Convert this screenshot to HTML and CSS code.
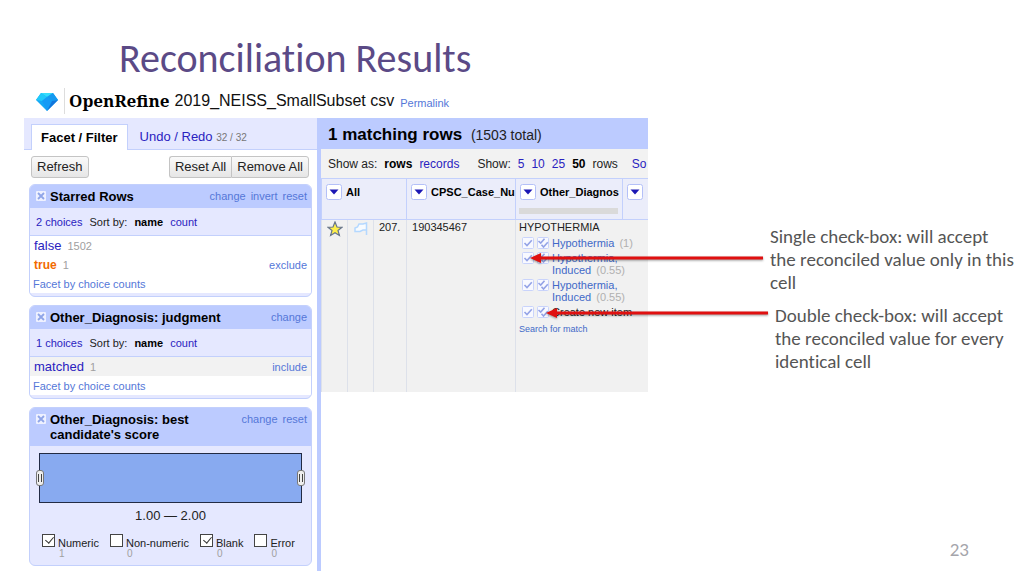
FILE: index.html
```html
<!DOCTYPE html>
<html lang="en">
<head>
<meta charset="utf-8">
<title>Reconciliation Results</title>
<link rel="stylesheet" href="styles.css">
</head>
<body>
<svg class="sprites" aria-hidden="true">
  <symbol id="check" viewBox="0 0 12 12"><rect x=".5" y=".5" width="11" height="11" rx="1" fill="#f8f9ff" stroke="#c9d3fb"/><path d="M2.500 6 5 8.600 9.800 3.300" fill="none" stroke="#94a3e6" stroke-width="1.600"/></symbol>
  <symbol id="double" viewBox="0 0 12 12"><rect x=".5" y=".5" width="11" height="11" rx="1" fill="#f8f9ff" stroke="#c9d3fb"/><path d="M1.500 4 3.700 6 7.500 1.800M4.500 7.800 6.500 10 10.800 5.300" fill="none" stroke="#94a3e6" stroke-width="1.600"/></symbol>
  <symbol id="close" viewBox="0 0 10 10"><rect width="10" height="10" rx="1" fill="#eef1ff"/><path d="M2 2 8 8M8 2 2 8" stroke="#8fa5e8" stroke-width="1.800"/></symbol>
  <symbol id="drop" viewBox="0 0 16 16"><rect x=".5" y=".5" width="15" height="15" rx="2" fill="#fff" stroke="#b4c0f8"/><path d="M3.500 5.500h9L8 10.500Z" fill="#1c18b4"/></symbol>
  <symbol id="grip" viewBox="0 0 8 16"><rect x=".5" y=".5" width="7" height="15" rx="2.500" fill="#eee" stroke="#777"/><path d="M2.500 4v8M5.500 4v8" stroke="#444"/></symbol>
</svg>
<main class="slide">
  <h1 class="title">Reconciliation Results</h1>
  <div class="content">
    <section class="app">
      <header class="app-header">
        <svg class="gem" viewBox="0 0 22 18"><path d="M5 0h12l5 7-11 11L0 7Z" fill="#16a8f5"/><path d="M5 0h12l-6 4Z" fill="#35ddfb"/><path d="M5 0 0 7l6 1 5-4Z" fill="#20c9fa"/><path d="m17 0 5 7-6 1-5-4Z" fill="#159af0"/><path d="m6 8 5-4 5 4-5 10Z" fill="#169bf5"/><path d="m22 7-6 1-5 10Z" fill="#1276dc"/></svg>
        <span class="brand">OpenRefine</span>
        <span class="project">2019_NEISS_SmallSubset csv</span>
        <a class="permalink" href="#">Permalink</a>
      </header>
      <div class="panels">
        <aside class="sidebar">
          <nav class="tabs">
            <a class="tab active" href="#">Facet / Filter</a>
            <a class="tab" href="#">Undo / Redo <small>32 / 32</small></a>
          </nav>
          <div class="toolbar">
            <button>Refresh</button>
            <div class="group"><button>Reset All</button><button>Remove All</button></div>
          </div>
          <div class="facets">
            <section class="facet">
              <header class="facet-head"><button class="icon-button" aria-label="Remove facet"><svg><use href="#close"/></svg></button><h2>Starred Rows</h2><div class="actions"><a href="#">change</a><a href="#">invert</a><a href="#">reset</a></div></header>
              <div class="sort"><a href="#">2 choices</a><span>Sort by:</span><b>name</b><a href="#">count</a></div>
              <div class="choices">
                <div class="choice"><a href="#">false</a><small>1502</small></div>
                <div class="choice"><a class="selected" href="#">true</a><small>1</small><a class="toggle" href="#">exclude</a></div>
                <a class="by-count" href="#">Facet by choice counts</a>
              </div>
            </section>
            <section class="facet">
              <header class="facet-head"><button class="icon-button" aria-label="Remove facet"><svg><use href="#close"/></svg></button><h2>Other_Diagnosis: judgment</h2><div class="actions"><a href="#">change</a></div></header>
              <div class="sort"><a href="#">1 choices</a><span>Sort by:</span><b>name</b><a href="#">count</a></div>
              <div class="choices">
                <div class="choice shaded"><a href="#">matched</a><small>1</small><a class="toggle" href="#">include</a></div>
                <a class="by-count" href="#">Facet by choice counts</a>
              </div>
            </section>
            <section class="facet">
              <header class="facet-head"><button class="icon-button" aria-label="Remove facet"><svg><use href="#close"/></svg></button><h2>Other_Diagnosis: best candidate's score</h2><div class="actions"><a href="#">change</a><a href="#">reset</a></div></header>
              <div class="histogram"><svg class="grip"><use href="#grip"/></svg><svg class="grip"><use href="#grip"/></svg></div>
              <p class="range">1.00 — 2.00</p>
              <div class="kinds">
                <label><input type="checkbox" checked><span>Numeric</span><small>1</small></label>
                <label><input type="checkbox"><span>Non-numeric</span><small>0</small></label>
                <label><input type="checkbox" checked><span>Blank</span><small>0</small></label>
                <label><input type="checkbox"><span>Error</span><small>0</small></label>
              </div>
            </section>
          </div>
        </aside>
        <section class="results">
          <h2 class="summary">1 matching rows <span>(1503 total)</span></h2>
          <div class="paging"><span>Show as:</span><b>rows</b><a href="#">records</a><span class="show">Show:</span><a href="#">5</a><a href="#">10</a><a href="#">25</a><b>50</b><span>rows</span><a class="sorting" href="#">So</a></div>
          <table class="grid">
            <colgroup><col class="c-star"><col class="c-flag"><col class="c-num"><col class="c-case"><col class="c-diag"><col></colgroup>
            <thead>
              <tr>
                <th colspan="3"><div class="column"><button class="icon-button" aria-label="All menu"><svg><use href="#drop"/></svg></button><span>All</span></div></th>
                <th><div class="column"><button class="icon-button" aria-label="Case menu"><svg><use href="#drop"/></svg></button><span>CPSC_Case_Nu</span></div></th>
                <th><div class="column"><button class="icon-button" aria-label="Diagnosis menu"><svg><use href="#drop"/></svg></button><span>Other_Diagnos</span></div><div class="quality"></div></th>
                <th><div class="column"><button class="icon-button" aria-label="Column menu"><svg><use href="#drop"/></svg></button></div></th>
              </tr>
            </thead>
            <tbody>
              <tr>
                <td class="mark"><svg class="star" viewBox="0 0 16 16"><path d="m8 1 2 5 5 .3-4 3.200 1.400 5L8 11.800 3.600 14.500l1.400-5-4-3.200L6 6Z" fill="#fff04a" stroke="#66748c" stroke-width="1.200"/></svg></td>
                <td class="mark"><svg class="flag" viewBox="0 0 16 16"><path d="M13.500 14V2L10 3H6L4.500 6 2 7v3.500h5L10 9h3.500" fill="#f7fbff" stroke="#b4d8ff" stroke-width="1.500"/></svg></td>
                <td>207.</td>
                <td>190345467</td>
                <td class="diagnosis" colspan="2">
                  <div>HYPOTHERMIA</div>
                  <ul class="candidates">
                    <li><button class="icon-button" aria-label="Match this cell"><svg><use href="#check"/></svg></button><button class="icon-button" aria-label="Match identical cells"><svg><use href="#double"/></svg></button><span><a href="#">Hypothermia</a> <small>(1)</small></span></li>
                    <li><button class="icon-button" aria-label="Match this cell"><svg><use href="#check"/></svg></button><button class="icon-button" aria-label="Match identical cells"><svg><use href="#double"/></svg></button><span><a href="#">Hypothermia,<br>Induced</a> <small>(0.55)</small></span></li>
                    <li><button class="icon-button" aria-label="Match this cell"><svg><use href="#check"/></svg></button><button class="icon-button" aria-label="Match identical cells"><svg><use href="#double"/></svg></button><span><a href="#">Hypothermia,<br>Induced</a> <small>(0.55)</small></span></li>
                    <li><button class="icon-button" aria-label="Match this cell"><svg><use href="#check"/></svg></button><button class="icon-button" aria-label="Match identical cells"><svg><use href="#double"/></svg></button><span>Create new item</span></li>
                  </ul>
                  <a class="search" href="#">Search for match</a>
                </td>
              </tr>
            </tbody>
          </table>
        </section>
      </div>
    </section>
    <aside class="notes">
      <p>Single check-box: will accept the reconciled value only in this cell</p>
      <p class="second">Double check-box: will accept the reconciled value for every identical cell</p>
    </aside>
    <svg class="arrow single" viewBox="0 0 233 12"><path d="M9 6H233" stroke="#e01010" stroke-width="3"/><path d="M0 6 11 1v10Z" fill="#e01010"/></svg>
    <svg class="arrow double" viewBox="0 0 222 12"><path d="M9 6H222" stroke="#e01010" stroke-width="3"/><path d="M0 6 11 1v10Z" fill="#e01010"/></svg>
  </div>
  <footer class="page-number">23</footer>
</main>
</body>
</html>
```
FILE: styles.css
```css
* { box-sizing: border-box; }
body { margin: 0; background: #fff; color: #222; font-family: "Liberation Sans", Arial, sans-serif; font-size: 13px; line-height: 14px; }
h1, h2, p, ul { margin: 0; padding: 0; }
a { color: #2a22c0; text-decoration: none; }
b { color: #000; }
small { color: #a0a0a0; font-size: 11px; }
button { font: inherit; color: inherit; }
.sprites { position: absolute; width: 0; height: 0; }
.icon-button { flex: none; display: block; padding: 0; border: 0; background: none; }
.icon-button svg { display: block; width: 100%; height: 100%; }

.slide { position: relative; min-height: 100vh; padding: 34px 0 6px 24px; }
.title { padding-left: 95px; color: #5b4a86; font: 400 40px/50px Carlito, Calibri, Lato, sans-serif; font-variant-ligatures: none; }
.content { position: relative; display: grid; grid-template-columns: minmax(0, 624fr) minmax(0, 376fr); }

.app-header { display: flex; align-items: center; height: 34px; padding-left: 12px; white-space: nowrap; }
.gem { width: 22px; height: 18px; margin: 2px 6px 0 0; }
.brand { padding-left: 4px; border-left: 1px solid #ddd; color: #000; font: 700 17px/26px "Noto Serif", "Liberation Serif", serif; }
.project { margin-left: 5px; color: #111; font-size: 16px; }
.permalink { margin: 3px 0 0 6px; color: #5577d8; font-size: 11px; }

.panels { display: flex; }
.sidebar { flex: 0 0 293px; padding-bottom: 5px; }
.tabs { display: flex; align-items: flex-end; height: 32px; padding-left: 7px; background: #e5e8ff; border-bottom: 1px solid #c3d0fc; }
.tab { padding: 7px 12px 5px; height: 26px; line-height: 14px; }
.tab.active { margin-bottom: -1px; padding: 6px 9px; background: #fff; border: 1px solid #c3d0fc; border-bottom: 0; color: #000; font-weight: 700; }
.tab small { color: #777; font-size: 10px; }
.toolbar { display: flex; justify-content: space-between; padding: 6px 8px 6px 7px; }
.toolbar button { height: 22px; padding: 0 5px; border: 1px solid #c4c4c4; border-radius: 3px; background: linear-gradient(#fafafa, #e6e6e6); }
.group { display: flex; }
.group button:first-child { border-radius: 3px 0 0 3px; border-right: 0; }
.group button:last-child { border-radius: 0 3px 3px 0; }

.facets { display: flex; flex-direction: column; gap: 8px; padding: 0 5px; }
.facet { padding-bottom: 3px; border: 1px solid #c3d0fc; border-radius: 6px; background: #e5e8ff; overflow: hidden; }
.facet-head { display: flex; align-items: flex-start; padding: 4px 4px 4px 6px; background: #bccbff; }
.facet-head .icon-button { width: 10px; height: 10px; margin: 2px 4px 0 0; }
.facet-head h2 { flex: 1; color: #000; font-size: 13px; line-height: 15px; }
.actions { display: flex; gap: 5px; font-size: 11px; }
.actions a, .toggle, .by-count { color: #5577d8; font-size: 11px; }
.sort { display: flex; gap: 7px; height: 28px; padding: 7px 6px; font-size: 11px; border-bottom: 1px solid #c3d0fc; }
.choices { background: #fff; }
.choice { display: flex; gap: 6px; align-items: baseline; padding: 3px 4px 2px; }
.choice.shaded { background: #f2f2f2; }
.choice .selected { color: #f26a00; font-size: 12px; font-weight: 700; }
.choice .toggle { margin-left: auto; }
.by-count { display: block; padding: 3px 3px 2px; }
.histogram { display: flex; justify-content: space-between; align-items: center; height: 50px; margin: 7px 9px 6px; background: #88aaf0; border: 1px solid #222b44; }
.grip { width: 8px; height: 16px; margin: 0 -4px; }
.range { text-align: center; }
.kinds { display: flex; gap: 11px; padding: 11px 12px 3px; font-size: 11px; line-height: 12px; }
.kinds label { display: grid; grid-template-columns: 13px auto; column-gap: 3px; }
.kinds input { appearance: none; width: 13px; height: 13px; margin: 0; border: 1px solid #444; background: #fff; }
.kinds input:checked::after { content: ""; display: block; width: 4px; height: 7px; margin: 0 0 0 4px; border: solid #333; border-width: 0 1px 1px 0; transform: rotate(40deg); }
.kinds span { padding-top: 3px; }
.kinds small { grid-column: 1 / 3; padding-left: 17px; line-height: 10px; font-size: 10px; }

.results { flex: 1; min-width: 0; border-left: 4px solid #bccbff; }
.summary { height: 31px; padding: 8px 7px; background: #bccbff; color: #000; font-size: 17px; line-height: 18px; white-space: nowrap; overflow: hidden; }
.summary span { margin-left: 4px; color: #222; font-size: 14px; font-weight: 400; }
.paging { display: flex; gap: 7px; height: 29px; padding: 8px 7px; background: #f2f2f2; font-size: 12px; white-space: nowrap; overflow: hidden; }
.paging .show { margin-left: 11px; }
.paging .sorting { margin-left: 7px; }
.grid { width: 100%; table-layout: fixed; border-collapse: collapse; background: #f1f1f1; }
.c-star, .c-flag { width: 26px; }
.c-num { width: 33px; }
.c-case { width: 109px; }
.c-diag { width: 107px; }
.grid th { height: 41px; padding: 5px 4px; vertical-align: top; border: solid #c3d0fc; border-width: 1px 0 1px 1px; background: #ebedfa; font-size: 11px; text-align: left; color: #000; overflow: hidden; }
.grid td { height: 172px; padding: 0 5px; vertical-align: top; border-left: 1px solid #dde1ea; font-size: 11px; }
.column { display: flex; align-items: center; gap: 4px; white-space: nowrap; }
.column .icon-button { width: 16px; height: 16px; }
.quality { height: 6px; margin: 8px 0 0 -1px; background: #dadada; }
.grid .mark { padding: 1px 0 0 5px; }
.star, .flag { display: block; width: 16px; height: 16px; }
.grid .diagnosis { padding-left: 3px; }
.candidates { list-style: none; display: flex; flex-direction: column; gap: 3px; padding: 3px 0 0 3px; line-height: 12px; }
.candidates li { display: flex; align-items: flex-start; gap: 3px; }
.candidates .icon-button { width: 12px; height: 12px; }
.candidates a { color: #4169c8; }
.candidates small { margin-left: 2px; color: #b0b0b0; }
.search { display: block; padding-top: 5px; color: #4169c8; font-size: 9px; line-height: 12px; }

.notes { padding: 141px 6px 0 122px; color: #555; font: 19px/23px Carlito, Calibri, Lato, sans-serif; font-variant-ligatures: none; }
.notes .second { margin-top: 10px; padding-left: 5px; }
.arrow { position: absolute; height: 12px; filter: drop-shadow(0 1px 1px #0006); }
.arrow.single { left: 506px; top: 168px; width: 233px; }
.arrow.double { left: 522px; top: 223px; width: 222px; }
.page-number { position: absolute; right: 55px; bottom: 16px; color: #a5a5ab; font: 19px/23px Carlito, Calibri, Lato, sans-serif; }
```
